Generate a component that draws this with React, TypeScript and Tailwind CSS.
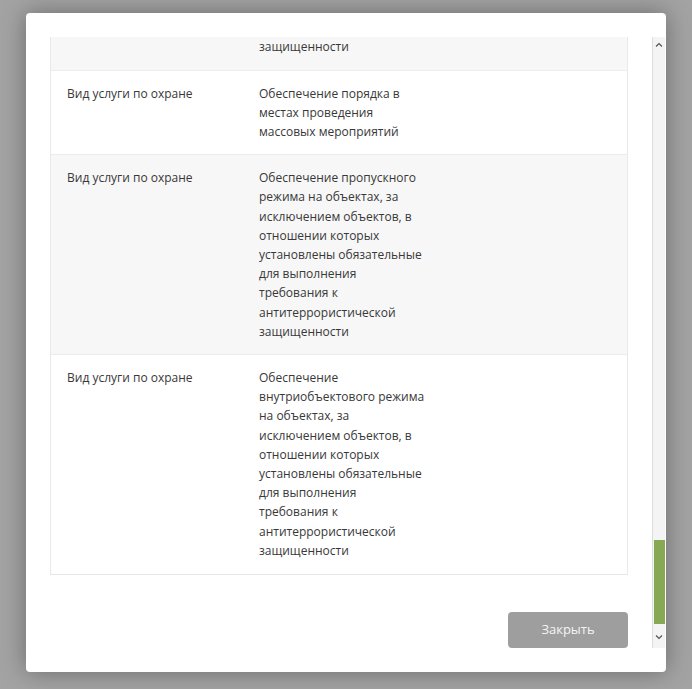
import React from "react";

const rows: { label: string; value: string; gray: boolean }[] = [
  {
    label: "Вид услуги по охране",
    value:
      "Обеспечение охраны объектов и (или) имущества на объектах, в отношении которых установлены обязательные для выполнения требования к антитеррористической защищенности",
    gray: true,
  },
  {
    label: "Вид услуги по охране",
    value: "Обеспечение порядка в местах проведения массовых мероприятий",
    gray: false,
  },
  {
    label: "Вид услуги по охране",
    value:
      "Обеспечение пропускного режима на объектах, за исключением объектов, в отношении которых установлены обязательные для выполнения требования к антитеррористической защищенности",
    gray: true,
  },
  {
    label: "Вид услуги по охране",
    value:
      "Обеспечение внутриобъектового режима на объектах, за исключением объектов, в отношении которых установлены обязательные для выполнения требования к антитеррористической защищенности",
    gray: false,
  },
];

export default function App() {
  return (
    <div
      className="w-[692px] h-[689px] bg-[#a3a3a3] flex items-start justify-center pt-[13px] overflow-hidden"
      style={{ fontFamily: '"Open Sans", "Noto Sans", sans-serif' }}
    >
      <div className="w-[640px] h-[659px] bg-white rounded-[4px] shadow-[0_0_24px_rgba(0,0,0,0.35)] flex pl-[24px] pt-[24px] pb-[24px] pr-[1px]">
        <div className="flex-1 overflow-hidden flex flex-col justify-end">
          <div className="border border-[#e9e9e9] border-b-[#e6e6e6]">
            {rows.map((r, i) => (
              <div
                key={i}
                className={`flex text-[12px] leading-[19.2px] text-[#383838] ${
                  i === 3 ? "pt-[13px] pb-[14px]" : "py-[13px]"
                } ${i > 0 ? "border-t border-[#ececec]" : ""} ${
                  r.gray ? "bg-[#f7f7f7]" : "bg-white"
                }`}
              >
                <div className="w-[208px] pl-[16px] shrink-0">{r.label}</div>
                <div className="w-[166px]">{r.value}</div>
              </div>
            ))}
          </div>
          <div className="flex justify-end mt-[37px]">
            <button className="w-[120px] h-[36px] rounded-[4px] bg-[#9e9e9e] text-[#f4f4f4] text-[13px]">
              Закрыть
            </button>
          </div>
        </div>
        <div className="w-[24px] shrink-0" />
        <div className="w-[13px] shrink-0 bg-[#f4f4f4] border-l border-[#dcdcdc] flex flex-col items-center">
          <svg width="8" height="6" viewBox="0 0 8 6" className="mt-[5px]">
            <path d="M1 4.5 L4 1.5 L7 4.5" stroke="#555" strokeWidth="1.2" fill="none" />
          </svg>
          <div className="flex-1" />
          <div className="w-[11px] h-[84px] bg-[#88a953] self-end" />
          <svg width="8" height="6" viewBox="0 0 8 6" className="mt-[10px] mb-[8px]">
            <path d="M1 1.5 L4 4.5 L7 1.5" stroke="#555" strokeWidth="1.2" fill="none" />
          </svg>
        </div>
      </div>
    </div>
  );
}
